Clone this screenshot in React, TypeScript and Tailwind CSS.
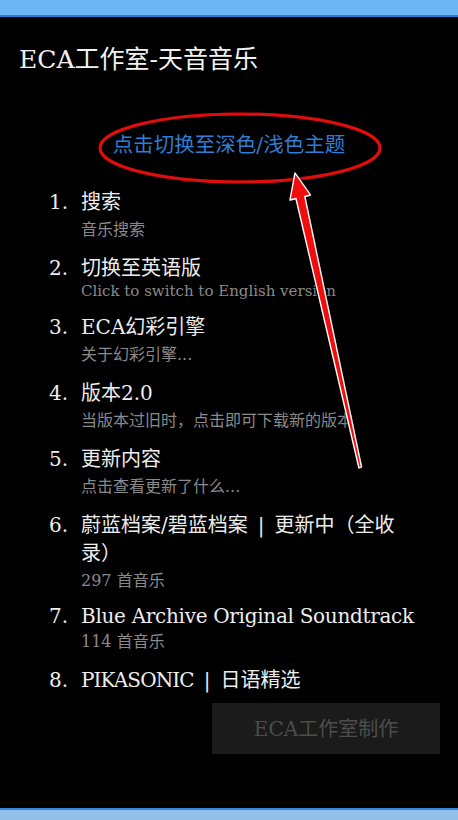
import React from 'react';

type Item = {
  title: React.ReactNode;
  sub?: string;
  latin?: boolean;
  latinSub?: boolean;
};

const items: Item[] = [
  { title: '搜索', sub: '音乐搜索' },
  { title: '切换至英语版', sub: 'Click to switch to English version', latinSub: true },
  { title: 'ECA幻彩引擎', sub: '关于幻彩引擎...' },
  { title: '版本2.0', sub: '当版本过旧时，点击即可下载新的版本' },
  { title: '更新内容', sub: '点击查看更新了什么...' },
  { title: '蔚蓝档案/碧蓝档案\u2002|\u2002更新中（全收录）', sub: '297 首音乐' },
  { title: 'Blue Archive Original Soundtrack', sub: '114 首音乐', latin: true },
  {
    title: (
      <>
        <span className="tracking-[-0.9px]">PIKASONIC</span>
        {'\u2002|\u2002日语精选'}
      </>
    ),
  },
];

const font = { fontFamily: '"DejaVu Serif", "Noto Sans CJK SC", serif' };

function Annotation() {
  // red callout drawn over the screenshot
  return (
    <svg className="pointer-events-none absolute inset-0" width="458" height="820" viewBox="0 0 458 820">
      <defs>
        <filter id="glow" x="-20%" y="-20%" width="140%" height="140%">
          <feDropShadow dx="0" dy="0" stdDeviation="2" floodColor="#000" floodOpacity="0.9" />
        </filter>
      </defs>
      <ellipse cx="240" cy="148" rx="140" ry="34" fill="none" stroke="#e10d0d" strokeWidth="3" filter="url(#glow)" />
      <polygon
        points="295,173 310.5,195 304.8,196.5 361.5,467 359,468 296,198.5 290,200"
        fill="#f01010"
        stroke="#ffffff"
        strokeWidth="1.3"
        strokeLinejoin="round"
        filter="url(#glow)"
      />
    </svg>
  );
}

export default function App() {
  return (
    <div className="relative flex h-[820px] w-full flex-col overflow-hidden bg-black" style={font}>
      <div className="h-[17px] shrink-0 border-b-2 border-[#2a7bd1] bg-[#6db6f3]" />

      <div className="flex flex-1 flex-col">
        <h1 className="mt-[27px] pl-[19px] text-[25px] leading-[32px] text-[#f2f2f2]">ECA工作室-天音音乐</h1>

        <div className="mt-[55px] text-center text-[20.5px] leading-[28px] text-[#2e7dd6]">点击切换至深色/浅色主题</div>

        <ol className="mt-[29px] flex flex-col gap-[12px] pl-[49px] pr-[40px]">
          {items.map((it, i) => (
            <li key={i} className="flex">
              <span className={`w-[32px] shrink-0 text-[20px] text-[#ededed] ${it.latin ? 'leading-[23px]' : 'leading-[28px]'}`}>
                {i + 1}.
              </span>
              <div className="flex flex-col">
                <span
                  className={`text-[20px] text-[#ededed] ${it.latin ? 'leading-[23px] tracking-[-0.3px]' : 'leading-[28px]'}`}
                >
                  {it.title}
                </span>
                {it.sub && (
                  <span
                    className={`text-[#8a8a8a] ${it.latinSub ? '-mt-[1px] text-[15px] leading-[20px]' : 'mt-[2px] text-[16px] leading-[24px]'}`}
                  >
                    {it.sub}
                  </span>
                )}
              </div>
            </li>
          ))}
        </ol>

        <div className="mt-[9px] flex justify-end pr-[18px]">
          <button className="h-[51px] w-[228px] bg-[#1b1b1b] text-[20px] text-[#4d4d4d]">ECA工作室制作</button>
        </div>
      </div>

      <div className="h-[12px] shrink-0 border-t-2 border-[#3a86d6] bg-[#91bfe8]" />

      <Annotation />
    </div>
  );
}
